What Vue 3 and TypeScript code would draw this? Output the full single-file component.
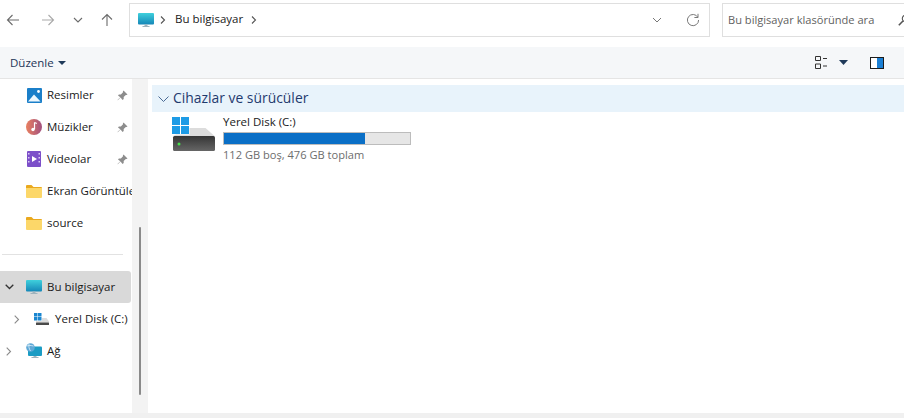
<script setup lang="ts">
interface NavItem { label: string; icon: string; pinned: boolean }
const quick: NavItem[] = [
  { label: 'Resimler', icon: 'pic', pinned: true },
  { label: 'Müzikler', icon: 'music', pinned: true },
  { label: 'Videolar', icon: 'video', pinned: true },
  { label: 'Ekran Görüntüleri', icon: 'folder', pinned: false },
  { label: 'source', icon: 'folder', pinned: false },
]
</script>

<template>
  <div class="window">
    <header class="toolbar">
      <div class="nav">
        <svg class="nb" width="16" height="16" viewBox="0 0 16 16"><path d="M14 8H2.500M7.500 3 2.500 8l5 5" fill="none" stroke="#6b6b6b" stroke-width="1.100"/></svg>
        <svg class="nb" width="16" height="16" viewBox="0 0 16 16"><path d="M2 8h11.500M8.500 3l5 5-5 5" fill="none" stroke="#a9a9a9" stroke-width="1.100"/></svg>
        <svg class="nb small" width="10" height="10" viewBox="0 0 10 10"><path d="M1 3l4 4 4-4" fill="none" stroke="#6b6b6b" stroke-width="1.100"/></svg>
        <svg class="nb" width="16" height="16" viewBox="0 0 16 16"><path d="M8 14V2.500M3 7.500l5-5 5 5" fill="none" stroke="#6b6b6b" stroke-width="1.100"/></svg>
      </div>
      <div class="address">
        <svg width="16" height="16" viewBox="0 0 16 16" class="pc"><rect x="0" y="1" width="16" height="11.500" rx="1" fill="url(#g1)"/><path d="M6.500 12.500h3V14h2v1h-7v-1h2z" fill="#9fb3bd"/><defs><linearGradient id="g1" x1="0" y1="0" x2="0" y2="1"><stop offset="0" stop-color="#3fd0dc"/><stop offset="1" stop-color="#1587b8"/></linearGradient></defs></svg>
        <svg class="crumb" width="6" height="8" viewBox="0 0 6 8"><path d="M1 .5 4.500 4 1 7.500" fill="none" stroke="#555" stroke-width="1.100"/></svg>
        <span class="path">Bu bilgisayar</span>
        <svg class="crumb" width="6" height="8" viewBox="0 0 6 8"><path d="M1 .5 4.500 4 1 7.500" fill="none" stroke="#555" stroke-width="1.100"/></svg>
        <span class="spacer"></span>
        <svg class="drop" width="10" height="6" viewBox="0 0 10 6"><path d="M1 1l4 4 4-4" fill="none" stroke="#777" stroke-width="1"/></svg>
        <svg class="refresh" width="14" height="14" viewBox="0 0 14 14"><path d="M11.800 4.200A5.600 5.600 0 1 0 12.600 7" fill="none" stroke="#7a7a7a" stroke-width="1"/><path d="M12 .8v3.700H8.400" fill="none" stroke="#7a7a7a" stroke-width="1"/></svg>
      </div>
      <div class="search">
        <span class="ph">Bu bilgisayar klasöründe ara</span>
        <svg width="12" height="12" viewBox="0 0 12 12" class="mag"><circle cx="7.500" cy="4.500" r="3.200" fill="none" stroke="#555" stroke-width="1.100"/><path d="M5 7 .8 11.200" stroke="#555" stroke-width="1.600"/></svg>
      </div>
    </header>

    <div class="command">
      <span class="edit">Düzenle</span>
      <svg class="caret" width="8" height="4" viewBox="0 0 8 4"><path d="M0 0h8L4 4z" fill="#1f3a5a"/></svg>
      <span class="spacer"></span>
      <svg class="view" width="13" height="13" viewBox="0 0 13 13"><path d="M.5.500h5v4h-5zM.5 8h5v4.500h-5z" fill="none" stroke="#333"/><path d="M8 2.500h4M8 10h4" stroke="#333"/></svg>
      <svg class="caret2" width="9" height="5" viewBox="0 0 9 5"><path d="M0 0h9L4.500 5z" fill="#1f3a5a"/></svg>
      <svg class="pane" width="14" height="12" viewBox="0 0 14 12"><rect x=".5" y=".5" width="13" height="11" fill="#fff" stroke="#1c1c1c"/><rect x="7" y="1" width="6" height="10" fill="#1a7fd4"/></svg>
    </div>

    <main class="body">
      <aside class="side">
        <ul class="quick">
          <li v-for="it in quick" :key="it.label" class="row">
            <span class="ico">
              <svg v-if="it.icon === 'pic'" width="15" height="15" viewBox="0 0 15 15"><rect width="15" height="15" rx="1" fill="#1b7fc9"/><path d="M1 13.500 7 6.500l6.500 7z" fill="#eef8fe"/><circle cx="11.500" cy="3.500" r="1.400" fill="#fff"/></svg>
              <svg v-else-if="it.icon === 'music'" width="16" height="16" viewBox="0 0 16 16"><circle cx="8" cy="8" r="8" fill="url(#mg)"/><path d="M8.500 3.500v6.800" stroke="#fff" stroke-width="1.200"/><path d="M8.500 3.500l2.300 1" stroke="#fff" stroke-width="1.200"/><circle cx="7" cy="10.500" r="1.700" fill="#fff"/><defs><linearGradient id="mg" x1="0" x2="1"><stop offset="0" stop-color="#e98060"/><stop offset="1" stop-color="#a2517f"/></linearGradient></defs></svg>
              <svg v-else-if="it.icon === 'video'" width="14" height="16" viewBox="0 0 14 16"><rect width="14" height="16" rx="1" fill="#7c4fc9"/><path d="M5 5l5 3-5 3z" fill="#fff"/><path d="M1 2h1.500v1.500H1zM1 6h1.500v1.500H1zM1 10h1.500v1.500H1zM11.500 2H13v1.500h-1.500zM11.500 6H13v1.500h-1.500zM11.500 10H13v1.500h-1.500z" fill="#d9c8f5"/></svg>
              <svg v-else width="16" height="13" viewBox="0 0 16 13"><path d="M0 1a1 1 0 0 1 1-1h4.500l2 2H15a1 1 0 0 1 1 1v1H0z" fill="#eaa91e"/><path d="M0 3h16v9a1 1 0 0 1-1 1H1a1 1 0 0 1-1-1z" fill="#fcd769"/></svg>
            </span>
            <span class="lbl">{{ it.label }}</span>
            <svg v-if="it.pinned" class="pin" width="11" height="11" viewBox="0 0 11 11"><path d="M6.500.5l4 4-1 .6-.7-.1-2.100 2.100v2L5.600 10 3.500 7.500.8 10.200.5 10l2.800-2.800L1 5.400l.9-1h2L6 2.300 5.900 1.500z" fill="#8d8d8d"/></svg>
          </li>
        </ul>
        <div class="sep"></div>
        <div class="row active">
          <svg class="chev" width="9" height="6" viewBox="0 0 9 6"><path d="M.7.7l3.800 3.800L8.300.7" fill="none" stroke="#333" stroke-width="1.300"/></svg>
          <span class="ico pcico">
            <svg width="16" height="16" viewBox="0 0 16 16"><rect y="1" width="16" height="11.500" rx="1" fill="url(#g1)"/><path d="M6.500 12.500h3V14h2v1h-7v-1h2z" fill="#9fb3bd"/></svg>
          </span>
          <span class="lbl">Bu bilgisayar</span>
        </div>
        <div class="row sub">
          <svg class="chevr" width="6" height="9" viewBox="0 0 6 9"><path d="M.7.7l3.800 3.800L.7 8.300" fill="none" stroke="#8a8a8a" stroke-width="1.100"/></svg>
          <span class="ico drv">
            <svg width="16" height="12" viewBox="0 0 16 12"><path d="M0 0h3.500v3.500H0zM4 0h3.500v3.500H4zM0 4h3.500v3.500H0zM4 4h3.500v3.500H4z" fill="#1a86d0"/><path d="M8 5h4.500l2.500 3.500v1H2V8h6z" fill="#dcdcdc"/><rect x="2" y="9.500" width="13" height="2.500" rx=".5" fill="#4a4a4a"/></svg>
          </span>
          <span class="lbl">Yerel Disk (C:)</span>
        </div>
        <div class="row net">
          <svg class="chevr" width="6" height="9" viewBox="0 0 6 9"><path d="M.7.7l3.800 3.800L.7 8.300" fill="none" stroke="#8a8a8a" stroke-width="1.100"/></svg>
          <span class="ico pcico">
            <svg width="16" height="16" viewBox="0 0 16 16"><rect x="2" y="3.500" width="14" height="9.500" rx="1" fill="#1b9cc4"/><path d="M7.500 13h3v1h2v1h-7v-1h2z" fill="#9fb3bd"/><circle cx="4.500" cy="4.500" r="4.300" fill="#5fa8d6"/><path d="M1 3c2-1 4-.5 6.500 0M3 1c-.5 2 0 5 1.500 7" fill="none" stroke="#dff1fb" stroke-width=".8"/></svg>
          </span>
          <span class="lbl">Ağ</span>
        </div>
      </aside>
      <div class="track"><div class="thumb"></div></div>
      <section class="content">
        <div class="group">
          <svg width="11" height="6" viewBox="0 0 11 6"><path d="M.5.500l5 5 5-5" fill="none" stroke="#4a6a95" stroke-width="1"/></svg>
          <span class="gtitle">Cihazlar ve sürücüler</span>
        </div>
        <div class="drive">
          <svg class="bigdisk" width="43" height="35" viewBox="0 0 43 35">
            <path d="M0 0h8v8H0zM9 0h8v8H9zM0 9h8v8H0zM9 9h8v8H9z" fill="#1d9be6"/>
            <path d="M17.500 11h16l9 8H1l3-1.500h13.500z" fill="#dcdcdc"/>
            <rect x="1" y="19" width="42" height="15" rx="1.500" fill="url(#dk)"/>
            <circle cx="7" cy="27" r="1.500" fill="#46e04a"/>
            <defs><linearGradient id="dk" x1="0" x2="0" y1="0" y2="1"><stop offset="0" stop-color="#353535"/><stop offset="1" stop-color="#666"/></linearGradient></defs>
          </svg>
          <div class="info">
            <div class="dname">Yerel Disk (C:)</div>
            <div class="bar"><div class="fill"></div></div>
            <div class="dsize">112 GB boş, 476 GB toplam</div>
          </div>
        </div>
      </section>
    </main>
    <footer class="foot"></footer>
  </div>
</template>

<style scoped>
.window { width: 904px; height: 418px; display: flex; flex-direction: column; background: #fff; font-family: "Open Sans", "Noto Sans", sans-serif; font-size: 11.5px; color: #1a1a1a; overflow: hidden; }
.toolbar { height: 47px; display: flex; align-items: center; box-sizing: border-box; padding: 0 0 7px 0; flex: none; }
.nav { width: 129px; display: flex; align-items: center; flex: none; position: relative; height: 16px; padding-left: 5px; box-sizing: border-box; }
.nb { margin-right: 19px; flex: none; }
.nb.small { margin: 0 16px 0 -2px; }
.address { width: 581px; height: 34px; border: 1px solid #dfdfdf; box-sizing: border-box; display: flex; align-items: center; padding-left: 8px; flex: none; }
.pc { margin-right: 6px; }
.crumb { flex: none; }
.path { margin: 0 8px 3px 9px; }
.spacer { flex: 1; }
.drop { margin-right: 24px; }
.refresh { margin-right: 9px; }
.search { width: 194px; height: 34px; margin-left: 12px; border: 1px solid #dfdfdf; border-right: 0; box-sizing: border-box; display: flex; align-items: center; padding-left: 5px; white-space: nowrap; flex: none; overflow: hidden; }
.ph { color: #5f5f5f; flex: none; width: 170px; font-size: 11.1px; margin-bottom: 2px; }
.mag { flex: none; }
.command { height: 32px; flex: none; background: #f5f7f9; border-bottom: 1px solid #e5e5e5; box-sizing: border-box; display: flex; align-items: center; padding: 0 20px 0 10px; color: #1d3557; }
.caret { margin-left: 4px; margin-top: 1px; }
.view { margin-right: 11px; margin-left: 1px; }
.caret2 { margin-right: 22px; }
.body { flex: 1; display: flex; min-height: 0; }
.side { width: 132px; flex: none; overflow: hidden; position: relative; }
.quick { list-style: none; margin: 0; padding: 0; }
.row { height: 32px; display: flex; align-items: center; white-space: nowrap; position: relative; }
.ico { width: 16px; margin-left: 26px; margin-right: 5px; display: flex; justify-content: center; flex: none; }
.lbl { flex: none; margin-bottom: 2px; }
.pin { position: absolute; left: 117px; top: 11px; }
.sep { height: 1px; background: #e2e2e2; margin: 15px 9px 16px 2px; }
.active { background: #d9d9d9; height: 32px; width: 131px; border-radius: 0 3px 3px 0; overflow: hidden; }
.chev { position: absolute; left: 5px; top: 13px; }
.chevr { position: absolute; left: 14px; top: 12px; }
.net .chevr { left: 6px; }
.sub .ico { margin-left: 34px; }
.track { width: 16px; flex: none; background: #f3f3f3; position: relative; }
.thumb { position: absolute; left: 7px; top: 148px; width: 2px; height: 168px; background: #8a8a8a; border-radius: 1px; }
.content { flex: 1; padding: 6px 0 0 4px; }
.group { height: 27px; background: #e8f3fb; display: flex; align-items: center; padding-left: 6px; gap: 4px; color: #1f3a6e; font-size: 13.9px; }
.gtitle { margin-bottom: 2px; }
.drive { display: flex; margin: 5px 0 0 20px; }
.bigdisk { flex: none; margin-right: 8px; }
.dname { line-height: 14px; margin-top: -2px; }
.bar { width: 188px; height: 13px; margin-top: 3px; background: #e6e6e6; border: 1px solid #bcbcbc; box-sizing: border-box; }
.fill { width: 76%; height: 100%; background: #0a6fc6; }
.dsize { color: #6d6d6d; margin-top: 2px; line-height: 15px; font-size: 11.1px; }
.foot { height: 5px; flex: none; background: #f0f0f0; }
</style>
